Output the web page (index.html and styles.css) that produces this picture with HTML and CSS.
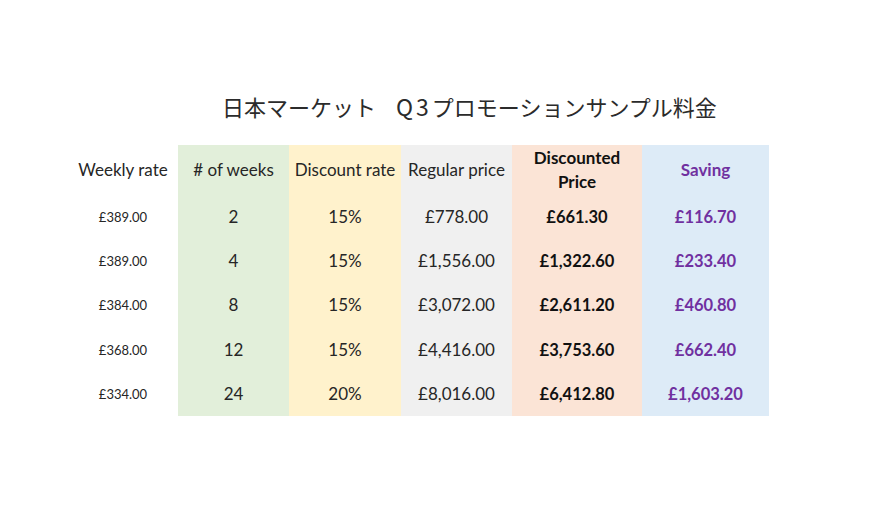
FILE: index.html
```html
<!DOCTYPE html>
<html lang="ja">
<head>
<meta charset="utf-8">
<title>日本マーケット Q3プロモーションサンプル料金</title>
<link rel="stylesheet" href="styles.css">
</head>
<body>
<main class="page">
  <h1 class="title"><span class="title-a">日本マーケット</span><span class="title-q">Q3</span><span>プロモーションサンプル料金</span></h1>
  <div class="table">
    <div class="cell c1 head">Weekly rate</div>
    <div class="cell c2 head">#&nbsp;of weeks</div>
    <div class="cell c3 head">Discount rate</div>
    <div class="cell c4 head">Regular price</div>
    <div class="cell c5 head bold">Discounted<br>Price</div>
    <div class="cell c6 head bold purple">Saving</div>

    <div class="cell c1 small">£389.00</div>
    <div class="cell c2">2</div>
    <div class="cell c3">15%</div>
    <div class="cell c4">£778.00</div>
    <div class="cell c5 bold">£661.30</div>
    <div class="cell c6 bold purple">£116.70</div>

    <div class="cell c1 small">£389.00</div>
    <div class="cell c2">4</div>
    <div class="cell c3">15%</div>
    <div class="cell c4">£1,556.00</div>
    <div class="cell c5 bold">£1,322.60</div>
    <div class="cell c6 bold purple">£233.40</div>

    <div class="cell c1 small">£384.00</div>
    <div class="cell c2">8</div>
    <div class="cell c3">15%</div>
    <div class="cell c4">£3,072.00</div>
    <div class="cell c5 bold">£2,611.20</div>
    <div class="cell c6 bold purple">£460.80</div>

    <div class="cell c1 small">£368.00</div>
    <div class="cell c2">12</div>
    <div class="cell c3">15%</div>
    <div class="cell c4">£4,416.00</div>
    <div class="cell c5 bold">£3,753.60</div>
    <div class="cell c6 bold purple">£662.40</div>

    <div class="cell c1 small">£334.00</div>
    <div class="cell c2">24</div>
    <div class="cell c3">20%</div>
    <div class="cell c4">£8,016.00</div>
    <div class="cell c5 bold">£6,412.80</div>
    <div class="cell c6 bold purple">£1,603.20</div>
  </div>
</main>
</body>
</html>
```
FILE: styles.css
```css
html, body {
  margin: 0;
  padding: 0;
  background: #ffffff;
}

.page {
  width: 873px;
  height: 519px;
  display: flex;
  flex-direction: column;
  font-family: Lato, "Noto Sans CJK JP", sans-serif;
  color: #262626;
}

.title {
  margin: 91px 0 0 222px;
  font-family: "Noto Sans CJK JP", sans-serif;
  font-weight: 400;
  font-size: 22px;
  line-height: 30px;
  color: #2b2b2b;
  white-space: nowrap;
  display: flex;
}

.title-a {
  margin-right: 20px;
}

.title-q {
  letter-spacing: 3px;
  font-size: 23px;
}

.table {
  margin: 24px 0 0 68px;
  display: grid;
  grid-template-columns: 110px 111px 112px 111px 130px 127px;
  grid-template-rows: 49px repeat(5, 44.4px);
  width: max-content;
}

.cell {
  display: flex;
  align-items: center;
  justify-content: center;
  text-align: center;
  font-size: 17px;
  line-height: 24px;
  padding-top: 1px;
}

.small {
  font-size: 13px;
}

.bold {
  font-weight: 700;
  font-size: 16.5px;
  color: #111111;
}

.head.bold {
  font-size: 17px;
}

.purple {
  color: #7030a0;
}

.c2 { background: #e2efda; }
.c3 { background: #fff2cc; }
.c4 { background: #f0f0f0; }
.c5 { background: #fbe4d6; }
.c6 { background: #ddebf7; }
```
